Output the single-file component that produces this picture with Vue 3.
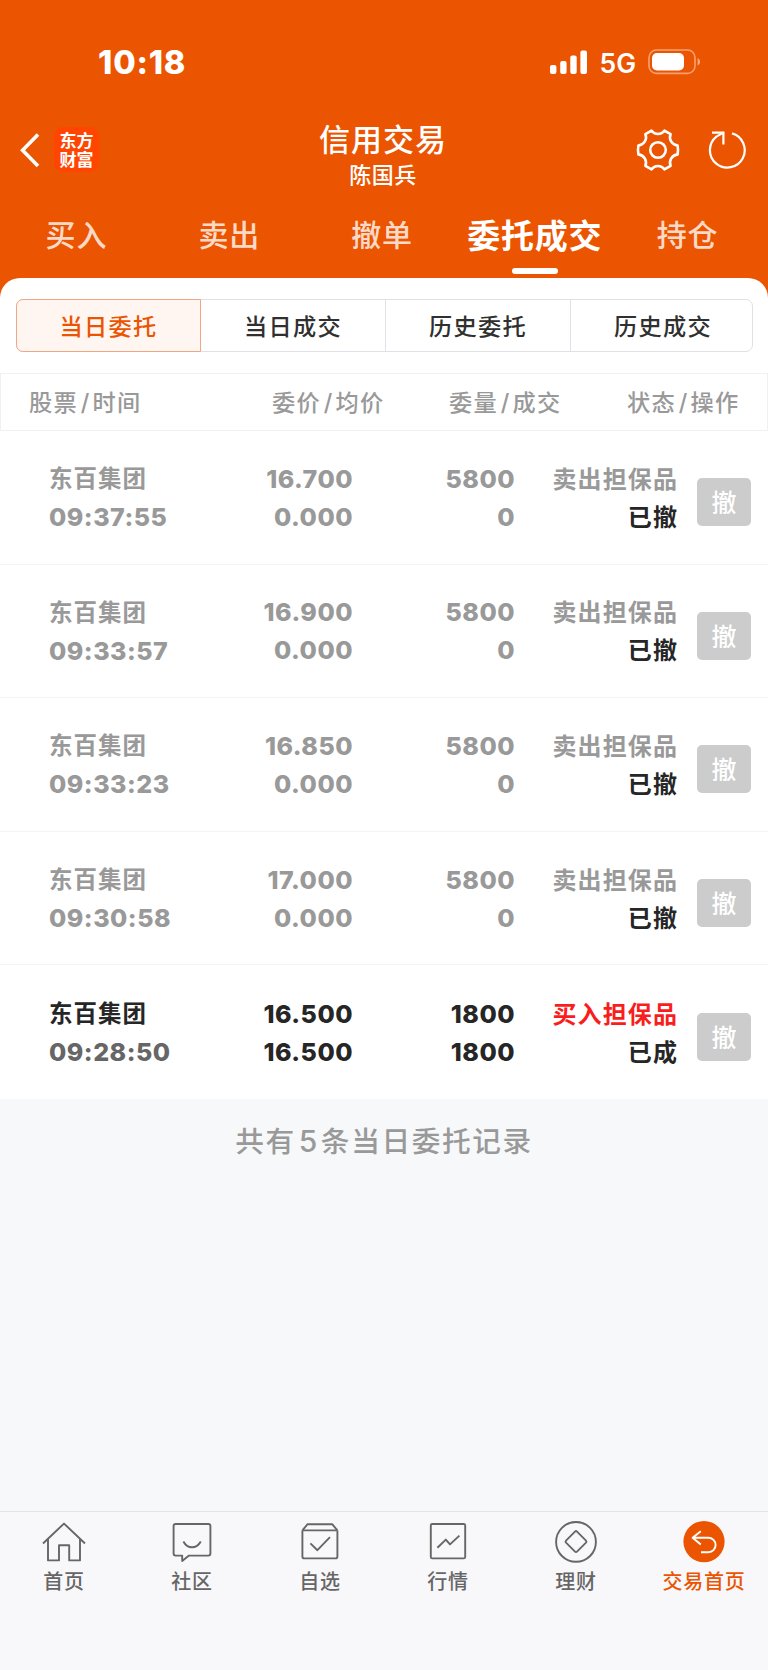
<script setup>
  import { ref } from "vue"

  const tabs = ["买入", "卖出", "撤单", "委托成交", "持仓"]
  const activeTab = ref("委托成交")

  const segments = ["当日委托", "当日成交", "历史委托", "历史成交"]
  const activeSegment = ref("当日委托")

  const columns = [
    ["股票", "时间"],
    ["委价", "均价"],
    ["委量", "成交"],
    ["状态", "操作"]
  ]

  const orders = [
    { time: "09:37:55", price: "16.700", avg: "0.000", amount: 5800, filled: 0, side: "卖出担保品", state: "已撤" },
    { time: "09:33:57", price: "16.900", avg: "0.000", amount: 5800, filled: 0, side: "卖出担保品", state: "已撤" },
    { time: "09:33:23", price: "16.850", avg: "0.000", amount: 5800, filled: 0, side: "卖出担保品", state: "已撤" },
    { time: "09:30:58", price: "17.000", avg: "0.000", amount: 5800, filled: 0, side: "卖出担保品", state: "已撤" },
    { time: "09:28:50", price: "16.500", avg: "16.500", amount: 1800, filled: 1800, side: "买入担保品", state: "已成" }
  ]

  const navItems = ["首页", "社区", "自选", "行情", "理财", "交易首页"]
  const activeNav = ref("交易首页")
</script>

<template>
  <div class="screen">
    <header class="top">
      <div class="status-bar">
        <span class="clock">10:18</span>
        <div class="status-right">
          <svg class="signal" width="38" height="25" viewBox="0 0 38 25" fill="#fff">
            <rect x="0" y="15" width="6.4" height="9" rx="2" />
            <rect x="10.2" y="11" width="6.4" height="13" rx="2" />
            <rect x="20.3" y="5.5" width="6.4" height="18.5" rx="2" />
            <rect x="30.4" y="0.5" width="6.6" height="23.5" rx="2" />
          </svg>
          <span class="network">5G</span>
          <svg class="battery" width="53" height="26" viewBox="0 0 53 26">
            <rect x="1" y="1" width="46" height="23.4" rx="7.5" fill="none" stroke="#fff" stroke-opacity=".45" stroke-width="1.6" />
            <rect x="4" y="4" width="32" height="17.4" rx="5" fill="#fff" />
            <path d="M49.6 9v7.6c1.6-.8 2.4-2.2 2.4-3.8s-.8-3-2.4-3.8z" fill="#fff" fill-opacity=".5" />
          </svg>
        </div>
      </div>

      <div class="title-bar">
        <div class="title-left">
          <svg width="22" height="36" viewBox="0 0 22 36" fill="none" stroke="#fff" stroke-width="3.6">
            <path d="M20 2.5 4.6 18.2 20 34" />
          </svg>
          <div class="logo">
            <span>东方</span>
            <span>财富</span>
          </div>
        </div>
        <div class="title">
          <h1>信用交易</h1>
          <p>陈国兵</p>
        </div>
        <div class="title-right">
          <svg width="44" height="44" viewBox="-22 -22 44 44" fill="none" stroke="#fff" stroke-width="2.6" stroke-linejoin="round">
            <circle r="7.8" />
            <path d="M-6.4-19.4C-3.4-14.9 3.4-14.9 6.4-19.4L12.6-15.8C10.6-11 13.6-5.2 19.6-4.4Q20.4 0 19.6 4.4C13.6 5.2 10.6 11 12.6 15.8L6.4 19.4C3.4 14.9-3.4 14.9-6.4 19.4L-12.6 15.8C-10.6 11-13.6 5.2-19.6 4.4Q-20.4 0-19.6-4.4C-13.6-5.2-10.6-11-12.6-15.8Z" />
          </svg>
          <svg width="40" height="40" viewBox="0 0 40 40" fill="none" stroke="#fff" stroke-width="2.2">
            <path d="M24 3.4A17.4 17.4 0 1 1 8.4 6.6L15.4 2.6" />
            <path d="M4 2.6H15.4V14.4" />
          </svg>
        </div>
      </div>

      <nav class="tabs">
        <a v-for="tab in tabs" :key="tab" :class="{ active: tab === activeTab }" @click="activeTab = tab">{{ tab }}</a>
      </nav>
    </header>

    <main class="panel">
      <div class="segments">
        <button
          v-for="segment in segments"
          :key="segment"
          :class="{ active: segment === activeSegment }"
          @click="activeSegment = segment"
        >
          {{ segment }}
        </button>
      </div>

      <div class="table-head">
        <span v-for="column in columns" :key="column[0]">{{ column[0] }}<i>/</i>{{ column[1] }}</span>
      </div>

      <div v-for="order in orders" :key="order.time" class="order" :class="{ done: order.filled > 0 }">
        <div class="cell name">
          <span>东百集团</span>
          <span class="num time">{{ order.time }}</span>
        </div>
        <div class="cell price num">
          <span>{{ order.price }}</span>
          <span>{{ order.avg }}</span>
        </div>
        <div class="cell amount num">
          <span>{{ order.amount }}</span>
          <span>{{ order.filled }}</span>
        </div>
        <div class="cell status">
          <span class="side">{{ order.side }}</span>
          <span class="state">{{ order.state }}</span>
        </div>
        <button class="cancel">撤</button>
      </div>
    </main>

    <p class="summary">共有<b>5</b>条当日委托记录</p>

    <footer class="nav">
      <a v-for="(item, i) in navItems" :key="item" :class="{ active: item === activeNav }" @click="activeNav = item">
        <svg width="44" height="44" viewBox="0 0 44 44" fill="none" stroke="currentColor" stroke-width="1.9" stroke-linejoin="round">
          <template v-if="i === 0">
            <path d="M1 22.5 22 2.6 43 22.5" />
            <path d="M6 18V39.4H17V24.3H27.2V39.4H38V18" />
          </template>
          <template v-else-if="i === 1">
            <path d="M5.6 3H38.4Q40.4 3 40.4 5V32.6Q40.4 34.6 38.4 34.6H19L12.2 40V34.6H5.6Q3.6 34.6 3.6 32.6V5Q3.6 3 5.6 3Z" />
            <path d="M13.4 20.5Q16.5 26.3 22 26.3T30.8 20.5" />
          </template>
          <template v-else-if="i === 2">
            <path d="M4.4 9.4V35.4Q4.4 37.4 6.4 37.4H37.4Q39.4 37.4 39.4 35.4V9.4" />
            <path d="M4.4 9.4 9.6 3.2H34.2L39.4 9.4" />
            <path d="M4.4 9.4H39.4" />
            <path d="M12.4 22.4 19.4 29.2 32 16.2" />
          </template>
          <template v-else-if="i === 3">
            <rect x="4.8" y="3" width="34.4" height="34.4" rx="1.5" />
            <path d="M11.4 26.8 19.8 18.6 24 23.4 33.4 14.6" />
          </template>
          <template v-else-if="i === 4">
            <circle cx="22" cy="20.9" r="19.9" />
            <path d="M21 10.6Q22 9.6 23 10.6L32 19.6Q33 20.6 32 21.6L23 30.6Q22 31.6 21 30.6L12 21.6Q11 20.6 12 19.6Z" />
          </template>
          <template v-else>
            <circle cx="22" cy="20.6" r="20.6" fill="currentColor" stroke="none" />
            <path d="M18.8 10.2 10.6 16.8 18.8 23.6M10.6 16.8H26.4A7.2 7.2 0 0 1 26.4 31.2H19" stroke="#fff" />
          </template>
        </svg>
        <span>{{ item }}</span>
      </a>
    </footer>
  </div>
</template>

<style>
  body {
    margin: 0;
    background: #f7f8fa;
  }
</style>

<style scoped>
  .screen {
    --c-main: #eb5502;
    width: 768px;
    height: 1670px;
    display: flex;
    flex-direction: column;
    background: #f7f8fa;
    font-family: "Inter", "Noto Sans CJK SC", sans-serif;
    box-sizing: border-box;
  }

  .screen * {
    box-sizing: border-box;
  }

  h1,
  p {
    margin: 0;
  }

  button {
    font-family: inherit;
    padding: 0;
  }

  .top {
    height: 300px;
    flex: none;
    background: var(--c-main);
    color: #fff;
  }

  .status-bar {
    height: 120px;
    padding: 4px 67px 0 98px;
    display: flex;
    align-items: center;
    justify-content: space-between;
  }

  .clock {
    padding-top: 1px;
    font-size: 32.5px;
    font-weight: 800;
    line-height: 40px;
    letter-spacing: 0.8px;
  }

  .status-right {
    display: flex;
    align-items: center;
  }

  .network {
    margin: 2px 12px 0 11px;
    font-size: 26.5px;
    font-weight: 600;
    line-height: 32px;
  }

  .title-bar {
    height: 76px;
    display: grid;
    grid-template-columns: 1fr auto 1fr;
    padding: 0 20px 0 18px;
  }

  .title-left,
  .title-right {
    display: flex;
    align-items: center;
    padding-bottom: 17px;
  }

  .title-right {
    justify-content: flex-end;
    gap: 28px;
  }

  .logo {
    width: 45px;
    height: 45px;
    margin-left: 14px;
    padding-bottom: 2px;
    display: flex;
    flex-direction: column;
    align-items: center;
    justify-content: center;
    gap: 2px;
    border-radius: 9px;
    background: #ff4500;
    font-family: "Noto Sans CJK SC", sans-serif;
    font-size: 17px;
    font-weight: 700;
    line-height: 17px;
  }

  .title {
    text-align: center;
  }

  .title h1 {
    font-size: 31px;
    font-weight: 500;
    line-height: 39px;
    letter-spacing: 1px;
  }

  .title p {
    font-size: 22px;
    font-weight: 500;
    line-height: 33px;
    letter-spacing: 0.5px;
  }

  .tabs {
    height: 82px;
    padding-right: 4px;
    display: grid;
    grid-template-columns: repeat(5, 1fr);
  }

  .tabs a {
    display: flex;
    flex-direction: column;
    align-items: center;
    padding-top: 17px;
    font-size: 30px;
    font-weight: 500;
    line-height: 44px;
    letter-spacing: 0.8px;
    white-space: nowrap;
    color: rgba(255, 255, 255, 0.8);
  }

  .tabs a.active {
    color: #fff;
    font-size: 33px;
    font-weight: 700;
    padding-top: 18px;
  }

  .tabs a.active::after {
    content: "";
    width: 46px;
    height: 6px;
    margin-top: 10px;
    border-radius: 3px;
    background: #fff;
  }

  .panel {
    margin-top: -22px;
    flex: none;
    padding-top: 21px;
    border-radius: 20px 20px 0 0;
    background: #fff;
  }

  .segments {
    height: 53px;
    margin: 0 15px 0 16px;
    display: grid;
    grid-template-columns: 184px 185px 185px 1fr;
    border: 1px solid #dfe1e6;
    border-radius: 7px;
  }

  .segments button {
    margin: -1px 0;
    padding-bottom: 2px;
    border: 0;
    border-right: 1px solid #dfe1e6;
    background: none;
    color: #303030;
    font-size: 23.2px;
    font-weight: 500;
    letter-spacing: 1.3px;
  }

  .segments button:last-child {
    padding-left: 3px;
    border-right: 0;
  }

  .segments button.active {
    margin-left: -1px;
    border: 1.5px solid #f0a884;
    border-radius: 7px 0 0 7px;
    background: #fff6f2;
    color: var(--c-main);
  }

  .table-head {
    height: 58px;
    margin-top: 21px;
    padding: 0 28px 2px;
    display: grid;
    grid-template-columns: 243px 177px 178px 1fr;
    align-items: center;
    border: 1px solid #f0f1f3;
    color: #999;
    font-size: 23.2px;
    font-weight: 500;
    letter-spacing: 1.2px;
    white-space: nowrap;
  }

  .table-head i {
    font-style: normal;
    margin: 0 2px 0 3px;
  }

  .order {
    height: 133.6px;
    padding: 3px 17px 0 49px;
    display: grid;
    grid-template-columns: 150px 154px 162px 163px 54px;
    align-items: center;
    border-bottom: 1px solid #f4f4f5;
    color: #999;
    font-size: 23.5px;
    font-weight: 700;
    line-height: 38px;
    letter-spacing: 1px;
    white-space: nowrap;
  }

  .order:last-child {
    border-bottom: 0;
  }

  .cell {
    display: flex;
    flex-direction: column;
  }

  .num {
    font-size: 25px;
    font-weight: 800;
    letter-spacing: 0.5px;
  }

  .name {
    margin-top: -1px;
  }

  .price,
  .amount {
    margin-top: -2px;
  }

  .price,
  .amount,
  .status {
    align-items: flex-end;
  }

  .status {
    font-size: 24px;
    letter-spacing: 1.1px;
  }

  .state,
  .order.done {
    color: #262626;
  }

  .done .time {
    color: #666;
  }

  .done .side {
    color: #f91d1d;
  }

  .cancel {
    height: 48px;
    width: 54px;
    margin: 7px 0 0 19px;
    padding-bottom: 2px;
    border: 0;
    border-radius: 5px;
    background: #ccc;
    color: #fff;
    font-size: 25px;
    font-weight: 500;
  }

  .summary {
    padding-top: 20px;
    color: #999;
    font-size: 28.7px;
    font-weight: 500;
    line-height: 44px;
    letter-spacing: 1.6px;
    text-align: center;
  }

  .summary b {
    margin: 0 2px 0 3px;
    font-size: 30px;
    font-weight: 500;
  }

  .nav {
    height: 159px;
    margin-top: auto;
    padding-top: 9px;
    display: grid;
    grid-template-columns: repeat(6, 1fr);
    border-top: 1px solid #e3e4e7;
    background: #f8f8fa;
    color: #666;
  }

  .nav a {
    display: flex;
    flex-direction: column;
    align-items: center;
    font-size: 20px;
    font-weight: 500;
    line-height: 30px;
    letter-spacing: 0.8px;
    white-space: nowrap;
  }

  .nav span {
    margin-top: 2px;
  }

  .nav a.active {
    color: var(--c-main);
  }
</style>
